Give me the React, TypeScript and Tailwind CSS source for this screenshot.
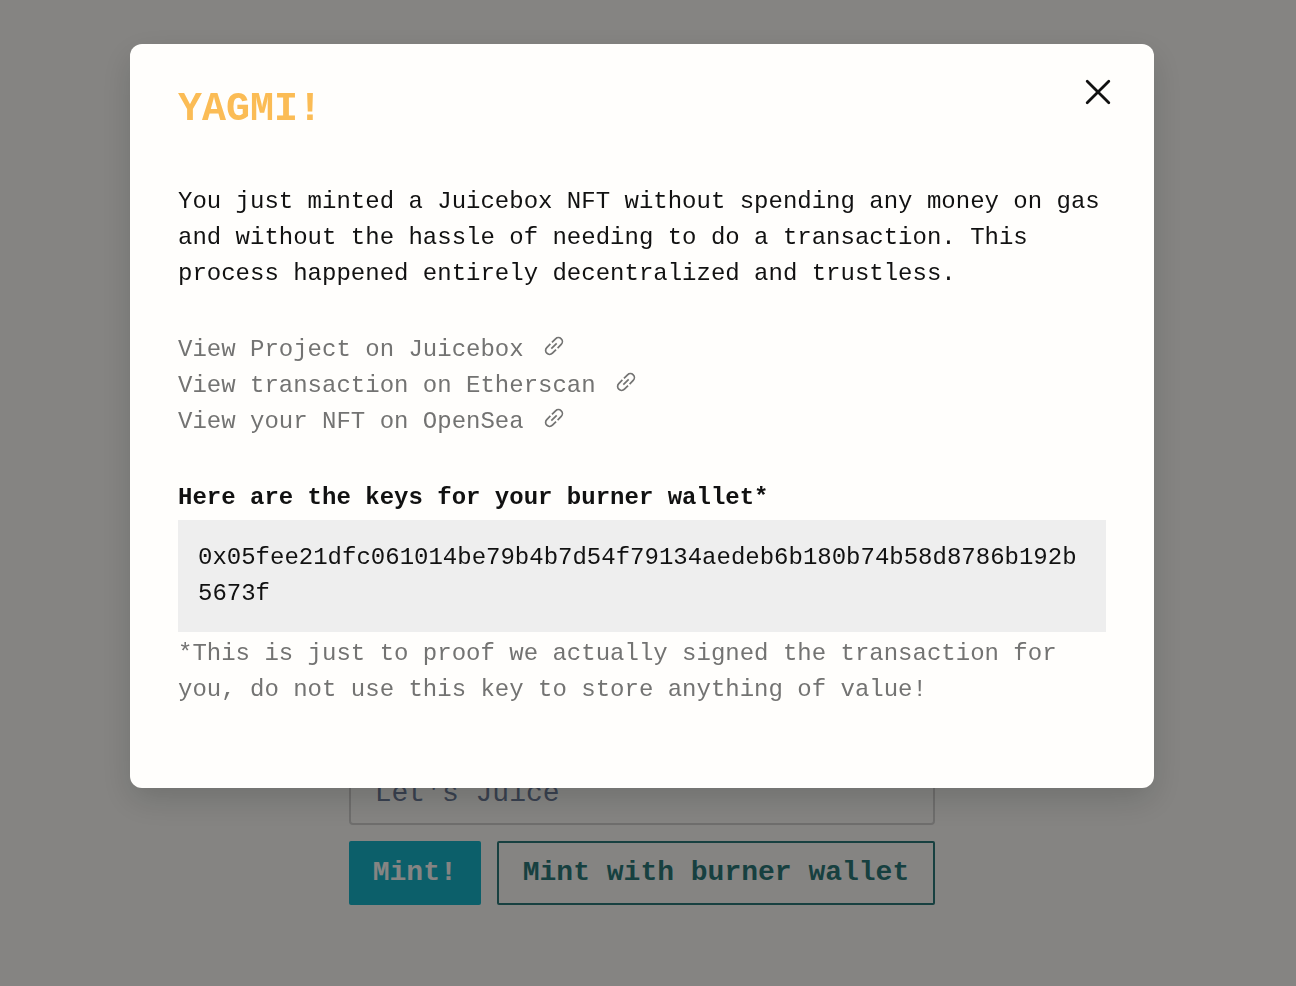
import { useState } from "react";

const links = [
  { label: "View Project on Juicebox", href: "#project" },
  { label: "View transaction on Etherscan", href: "#transaction" },
  { label: "View your NFT on OpenSea", href: "#nft" },
];

function LinkIcon() {
  return (
    <svg
      viewBox="0 0 24 24"
      className="mt-0.5 size-6"
      fill="none"
      stroke="currentColor"
      strokeWidth="1.7"
      aria-hidden="true"
    >
      <g transform="rotate(-45 12 12)">
        <path d="M13.1 8H18.2a4 4 0 0 1 0 8H13.1M10.9 8H5.8a4 4 0 0 0 0 8H10.9M8.2 12H15.8" />
      </g>
    </svg>
  );
}

function MintForm() {
  return (
    <form
      className="flex flex-col gap-4"
      onSubmit={(event) => event.preventDefault()}
    >
      <input
        aria-label="Message"
        placeholder="Let's Juice"
        className="h-16 w-full rounded-sm border-2 border-[#d4d3d1] bg-transparent px-6 text-[28px] placeholder:text-[#6f7f9b]"
      />
      <div className="flex gap-4">
        <button
          type="submit"
          className="h-16 rounded-xs bg-[#18b7cb] px-6 text-[28px] font-bold text-[#fffefc]"
        >
          Mint!
        </button>
        <button
          type="button"
          className="h-16 rounded-xs border-2 border-[#2d7c7b] px-6 text-[28px] font-bold text-[#2d7c7b]"
        >
          Mint with burner wallet
        </button>
      </div>
    </form>
  );
}

function MintedDialog({ onClose }: { onClose: () => void }) {
  return (
    <section
      role="dialog"
      aria-modal="true"
      aria-labelledby="dialog-title"
      className="w-full max-w-5xl rounded-xl bg-[#fffefc] px-12 pt-9 pb-20 text-2xl leading-9 text-[#111111] shadow-[0_12px_32px_rgba(0,0,0,0.16)]"
    >
      <header className="flex items-start justify-between">
        <h1
          id="dialog-title"
          className="text-[40px] leading-[60px] font-bold text-[#fbbc55]"
        >
          YAGMI!
        </h1>
        <button
          type="button"
          aria-label="Close"
          onClick={onClose}
          className="-mt-3 -mr-4 flex size-12 items-center justify-center"
        >
          <svg
            viewBox="0 0 48 48"
            className="size-12"
            fill="none"
            stroke="currentColor"
            strokeWidth="2.8"
            strokeLinecap="round"
            aria-hidden="true"
          >
            <path d="M13.2 13.2 34.8 34.8M34.8 13.2 13.2 34.8" />
          </svg>
        </button>
      </header>
      <p className="mt-11">
        You just minted a Juicebox NFT without spending any money on gas and
        without the hassle of needing to do a transaction. This process happened
        entirely decentralized and trustless.
      </p>
      <ul className="mt-10 text-[#737372]">
        {links.map((link) => (
          <li key={link.href}>
            <a href={link.href} className="inline-flex items-start gap-[18px]">
              {link.label}
              <LinkIcon />
            </a>
          </li>
        ))}
      </ul>
      <h2 className="mt-10 font-bold">
        Here are the keys for your burner wallet*
      </h2>
      <p className="my-1 bg-[#eeeeee] p-5 break-all">
        0x05fee21dfc061014be79b4b7d54f79134aedeb6b180b74b58d8786b192b5673f
      </p>
      <p className="text-[#737372]">
        *This is just to proof we actually signed the transaction for you, do
        not use this key to store anything of value!
      </p>
    </section>
  );
}

export default function App() {
  const [open, setOpen] = useState(true);

  return (
    <div className="font-['Liberation_Mono',monospace]">
      <main className="flex min-h-screen flex-col items-center justify-end bg-[#fffefa] pr-3 pb-[81px]">
        <MintForm />
      </main>
      {open && (
        <div className="fixed inset-0 flex items-start justify-center overflow-auto bg-black/48 pt-11 pr-3">
          <MintedDialog onClose={() => setOpen(false)} />
        </div>
      )}
    </div>
  );
}
